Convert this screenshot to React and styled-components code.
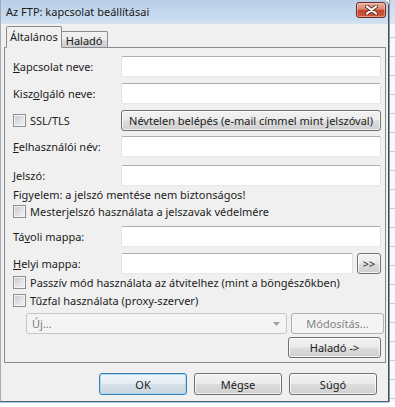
import React from "react";
import styled, { createGlobalStyle, css } from "styled-components";

const Global = createGlobalStyle`
  html, body { margin: 0; padding: 0; background: #fff; }
  body {
    width: 395px; height: 407px; overflow: hidden;
    font-family: "Noto Sans", "Open Sans", sans-serif;
    font-size: 11px; color: #1c1c1c;
  }
`;

const Screen = styled.div`
  display: flex;
  align-items: flex-start;
  width: 395px;
  height: 407px;
  background: #fff;
`;

const Window = styled.div`
  width: 389px;
  height: 402px;
  box-sizing: border-box;
  display: flex;
  flex-direction: column;
  background: #f0f0f0;
  border-left: 1px solid #a3abb4;
  border-right: 1px solid #3e4a57;
  border-bottom: 1px solid #55626f;
  border-top-right-radius: 6px;
  box-shadow: 0 1px 0 #a9c8e8;
  overflow: hidden;
`;

const TitleBar = styled.div`
  height: 23px;
  flex: none;
  display: flex;
  align-items: center;
  justify-content: space-between;
  padding-left: 5px;
  padding-right: 2px;
  background: linear-gradient(180deg, #b8cfe8 0%, #c4d7ec 55%, #d0e0f1 100%);
  border-bottom: 1px solid #d8e3ee;
`;

const Title = styled.span`
  font-size: 11px;
  color: #1a1a1a;
`;

const CloseButton = styled.div`
  width: 30px;
  height: 16px;
  box-sizing: border-box;
  margin-top: -3px;
  border: 1px solid #6f2b1e;
  border-radius: 3px;
  display: flex;
  align-items: center;
  justify-content: center;
  background: linear-gradient(180deg, #eab1a3 0%, #dc8470 45%, #c5452c 52%, #cd5a3e 100%);
  box-shadow: inset 0 0 0 1px rgba(255, 220, 210, 0.45);
`;

const Body = styled.div`
  flex: 1;
  display: flex;
  flex-direction: column;
  padding-left: 2px;
`;

const TabStrip = styled.div`
  display: flex;
  align-items: flex-end;
  height: 21px;
  margin-top: 2px;
  padding-left: 3px;
  position: relative;
  z-index: 1;
`;

const Tab = styled.div`
  box-sizing: border-box;
  display: flex;
  align-items: center;
  justify-content: center;
  border: 1px solid #898c95;
  border-radius: 2px 2px 0 0;
  ${(p) =>
    p.$active
      ? css`
          height: 22px;
          margin-bottom: -1px;
          border-bottom-color: #f0f0f0;
          background: #f0f0f0;
          padding: 0 3px 2px;
          margin-right: -1px;
          z-index: 2;
        `
      : css`
          height: 16px;
          background: linear-gradient(180deg, #f2f2f2 0%, #ebebeb 50%, #dddddd 51%, #cfcfcf 100%);
          padding: 1px 4px 0;
          border-bottom: none;
        `}
`;

const Panel = styled.div`
  width: 382px;
  height: 316px;
  box-sizing: border-box;
  margin-left: 1px;
  border: 1px solid #898c95;
  background: #f0f0f0;
  padding: 0 4px 0 8px;
  display: flex;
  flex-direction: column;
`;

const Row = styled.div`
  display: flex;
  align-items: center;
  height: ${(p) => p.$h || 21}px;
  margin-top: ${(p) => p.$mt || 0}px;
  margin-left: ${(p) => p.$ml || 0}px;
  gap: ${(p) => p.$gap || 0}px;
  justify-content: ${(p) => p.$justify || "flex-start"};
  flex: none;
`;

const Label = styled.label`
  width: 108px;
  flex: none;
  white-space: nowrap;
`;

const U = styled.span`
  text-decoration: underline;
`;

const TextInput = styled.input`
  flex: 1;
  min-width: 0;
  height: 21px;
  box-sizing: border-box;
  margin: 0 ${(p) => p.$mr || 0}px 0 0;
  padding: 0 3px;
  background: #fff;
  border: 1px solid;
  border-color: #abadb3 #dbdfe6 #e3e9ef #e2e3ea;
  border-radius: 2px;
  font: inherit;
  outline: none;
`;

const Button = styled.button`
  box-sizing: border-box;
  height: ${(p) => p.$h || 21}px;
  width: ${(p) => (p.$w ? `${p.$w}px` : "auto")};
  flex: ${(p) => (p.$grow ? 1 : "none")};
  margin: 0;
  padding: 0 4px;
  font: inherit;
  color: #1c1c1c;
  border: 1px solid #707070;
  border-radius: 3px;
  background: linear-gradient(180deg, #f2f2f2 0%, #ebebeb 48%, #dddddd 52%, #cfcfcf 100%);
  box-shadow: inset 0 0 0 1px rgba(255, 255, 255, 0.75);
  white-space: nowrap;
  ${(p) =>
    p.$default &&
    css`
      border-color: #3c7fb1;
      box-shadow: inset 0 0 0 1px #a6daf6;
      background: linear-gradient(180deg, #f0f5f8 0%, #e6edf2 48%, #d6e0e7 52%, #c8d5de 100%);
    `}
  ${(p) =>
    p.disabled &&
    css`
      color: #838383;
      border-color: #adb2b5;
      background: #f4f4f4;
      box-shadow: none;
    `}
`;

const Check = styled.span`
  width: 13px;
  height: 13px;
  box-sizing: border-box;
  flex: none;
  border: 1px solid #8e8f8f;
  background: linear-gradient(135deg, #c3c7cc 0%, #e4e5e7 60%, #f5f5f5 100%);
  box-shadow: inset 0 0 0 1px #f4f4f4;
`;

const CheckRow = styled(Row)`
  gap: 4px;
`;

const Combo = styled.div`
  box-sizing: border-box;
  width: 261px;
  height: 21px;
  flex: none;
  display: flex;
  align-items: center;
  justify-content: space-between;
  padding: 0 6px 0 5px;
  border: 1px solid #c4c8cc;
  border-radius: 3px;
  background: #f4f4f4;
  color: #7a7a7a;
`;

const Spacer = styled.div`
  flex: 1;
`;

const ButtonBar = styled.div`
  display: flex;
  justify-content: flex-end;
  gap: 7px;
  margin-top: 10px;
  padding-right: 11px;
`;

const Backdrop = styled.div`
  width: 6px;
  height: 402px;
  flex: none;
  background:
    linear-gradient(180deg, #c9d9ea 0px, #dce6f1 24px, transparent 24px),
    repeating-linear-gradient(180deg, #f6f8fa 0px, #f6f8fa 18px, #c6ced8 18px, #c6ced8 19px);
  background-color: #f6f8fa;
  border-left: 1px solid #8c99a6;
  box-sizing: border-box;
`;

export default function App() {
  return (
    <>
      <Global />
      <Screen>
        <Window>
          <TitleBar>
            <Title>Az FTP: kapcsolat beállításai</Title>
            <CloseButton>
              <svg width="13" height="10" viewBox="0 0 13 10">
                <path d="M2 1.5 L11 8.5 M11 1.5 L2 8.5" stroke="#6a3328" strokeWidth="4" strokeLinecap="round" />
                <path d="M2 1.5 L11 8.5 M11 1.5 L2 8.5" stroke="#fff" strokeWidth="2.2" strokeLinecap="round" />
              </svg>
            </CloseButton>
          </TitleBar>
          <Body>
            <TabStrip>
              <Tab $active>Általános</Tab>
              <Tab>Haladó</Tab>
            </TabStrip>
            <Panel>
              <Row $mt={8}>
                <Label><U>K</U>apcsolat neve:</Label>
                <TextInput readOnly />
              </Row>
              <Row $mt={6}>
                <Label>Kisz<U>o</U>lgáló neve:</Label>
                <TextInput readOnly />
              </Row>
              <Row $mt={6}>
                <CheckRow as="label" $h={21} style={{ width: 108, flex: "none" }}>
                  <Check />
                  SSL/TLS
                </CheckRow>
                <Button $grow>Névtelen belépés (e-mail címmel mint jelszóval)</Button>
              </Row>
              <Row $mt={5}>
                <Label><U>F</U>elhasználói név:</Label>
                <TextInput readOnly />
              </Row>
              <Row $mt={8}>
                <Label><U>J</U>elszó:</Label>
                <TextInput readOnly type="password" />
              </Row>
              <Row $h={14} $mt={1}>Figyelem: a jelszó mentése nem biztonságos!</Row>
              <CheckRow $h={15} $mt={3}>
                <Check />
                Mesterjelszó használata a jelszavak védelmére
              </CheckRow>
              <Row $mt={7}>
                <Label>Tá<U>v</U>oli mappa:</Label>
                <TextInput readOnly />
              </Row>
              <Row $mt={6}>
                <Label><U>H</U>elyi mappa:</Label>
                <TextInput readOnly $mr={4} />
                <Button $w={24}>&gt;&gt;</Button>
              </Row>
              <CheckRow $h={15} $mt={1}>
                <Check />
                Passzív mód használata az átvitelhez (mint a böngészőkben)
              </CheckRow>
              <CheckRow $h={15} $mt={3}>
                <Check />
                Tűzfal használata (proxy-szerver)
              </CheckRow>
              <Row $mt={5} $ml={13} $gap={2}>
                <Combo>
                  <span>Új...</span>
                  <svg width="7" height="4" viewBox="0 0 7 4">
                    <path d="M0 0 H7 L3.5 4 Z" fill="#a0a0a0" />
                  </svg>
                </Combo>
                <Spacer />
                <Button $w={93} disabled>Módosítás...</Button>
              </Row>
              <Row $mt={3} $justify="flex-end">
                <Button $w={93}>Haladó -&gt;</Button>
              </Row>
            </Panel>
            <ButtonBar>
              <Button $w={88} $h={22} $default>OK</Button>
              <Button $w={88} $h={22}>Mégse</Button>
              <Button $w={88} $h={22}>Súgó</Button>
            </ButtonBar>
          </Body>
        </Window>
        <Backdrop />
      </Screen>
    </>
  );
}
